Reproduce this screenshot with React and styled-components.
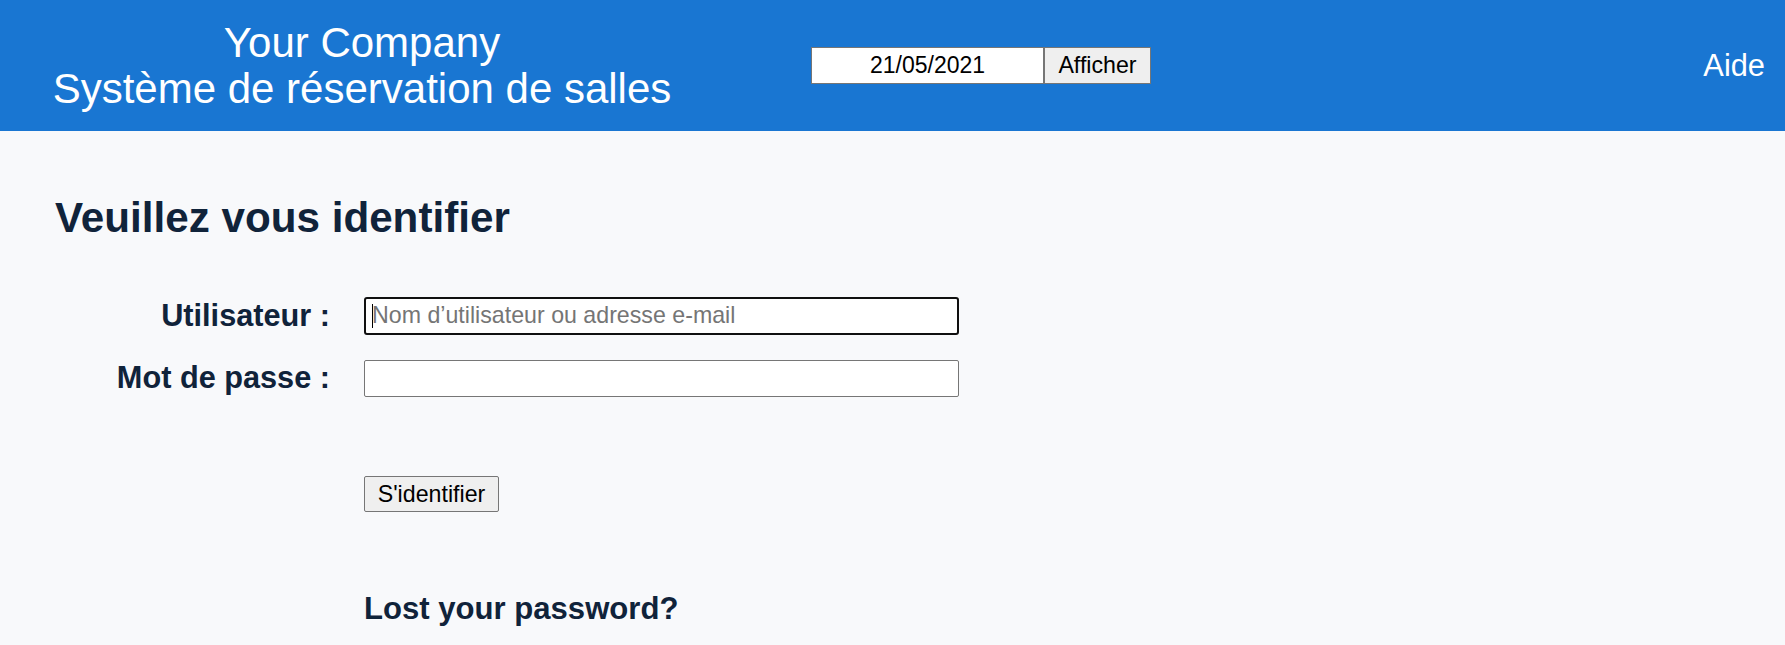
import React from 'react';
import styled, { createGlobalStyle } from 'styled-components';

const GlobalStyle = createGlobalStyle`
  body {
    margin: 0;
    background: #f8f9fb;
    font-family: "Liberation Sans", Arial, sans-serif;
  }
`;

const Header = styled.header`
  display: flex;
  align-items: center;
  height: 131px;
  background: #1976d2;
  color: #ffffff;
`;

const Brand = styled.div`
  width: 724px;
  text-align: center;
  font-size: 42px;
  line-height: 45.5px;
`;

const DateForm = styled.form`
  display: flex;
  margin-left: 87px;
`;

const DateInput = styled.input`
  box-sizing: border-box;
  width: 233px;
  height: 37.5px;
  margin: 0;
  padding: 0 4px;
  border: 1px solid #767676;
  background: #ffffff;
  color: #000000;
  font-family: inherit;
  font-size: 23px;
  text-align: center;
`;

const Button = styled.button`
  box-sizing: border-box;
  width: ${props => props.$width}px;
  height: ${props => props.$height}px;
  margin: 0;
  padding: 0;
  border: 1px solid #767676;
  border-radius: ${props => props.$radius || 0}px;
  background: #efefef;
  color: #000000;
  font-family: inherit;
  font-size: 23.2px;
`;

const HelpLink = styled.a`
  margin-left: auto;
  padding-right: 20px;
  color: #ffffff;
  font-size: 30.8px;
  text-decoration: none;
`;

const Main = styled.main`
  padding: 63px 55px 40px;
  color: #10233a;
`;

const Title = styled.h1`
  margin: 0;
  font-size: 42.2px;
  font-weight: bold;
`;

const LoginForm = styled.form`
  display: grid;
  grid-template-columns: 275px 595px;
  column-gap: 34px;
  row-gap: 25px;
  margin-top: 55px;
`;

const Label = styled.label`
  display: flex;
  align-items: center;
  justify-content: flex-end;
  font-size: 30.7px;
  font-weight: bold;
`;

const Field = styled.div`
  position: relative;
`;

const TextInput = styled.input`
  box-sizing: border-box;
  display: block;
  width: 100%;
  height: 37.5px;
  margin: 0;
  padding: 0 ${props => (props.$focused ? 6 : 7)}px;
  border: ${props => (props.$focused ? '2px solid #101010' : '1px solid #767676')};
  border-radius: ${props => (props.$focused ? 3 : 2)}px;
  background: #ffffff;
  color: #000000;
  font-family: inherit;
  font-size: 23.2px;
  outline: none;

  &::placeholder {
    color: #757575;
  }
`;

const Caret = styled.span`
  position: absolute;
  left: 8px;
  top: 7px;
  width: 1px;
  height: 24px;
  background: #000000;
`;

const Actions = styled.div`
  grid-column: 2;
  margin-top: 54px;
`;

const Lost = styled.h2`
  grid-column: 2;
  margin: 54px 0 0;
  font-size: 31.1px;
  font-weight: bold;
`;

export default function App() {
  return (
    <>
      <GlobalStyle />
      <Header>
        <Brand>
          Your Company
          <br />
          Système de réservation de salles
        </Brand>
        <DateForm onSubmit={e => e.preventDefault()}>
          <DateInput type="text" defaultValue="21/05/2021" />
          <Button type="submit" $width={107} $height={37.5}>Afficher</Button>
        </DateForm>
        <HelpLink href="#">Aide</HelpLink>
      </Header>
      <Main>
        <Title>Veuillez vous identifier</Title>
        <LoginForm onSubmit={e => e.preventDefault()}>
          <Label htmlFor="user">Utilisateur :</Label>
          <Field>
            <TextInput id="user" $focused placeholder="Nom d’utilisateur ou adresse e-mail" />
            <Caret />
          </Field>
          <Label htmlFor="pass">Mot de passe :</Label>
          <Field>
            <TextInput id="pass" type="password" />
          </Field>
          <Actions>
            <Button type="submit" $width={135} $height={36} $radius={2}>S'identifier</Button>
          </Actions>
          <Lost>Lost your password?</Lost>
        </LoginForm>
      </Main>
    </>
  );
}
